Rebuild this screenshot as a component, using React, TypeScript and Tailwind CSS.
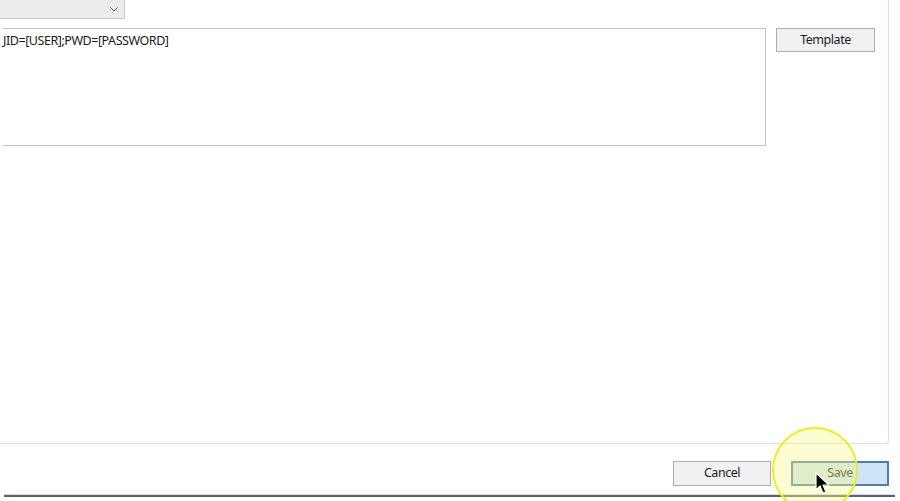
import React from 'react'

const font = { fontFamily: '"Noto Sans", "Open Sans", sans-serif' }

const Chevron = () => (
  <svg width="8" height="5" viewBox="0 0 8 5" className="text-[#555]">
    <path d="M0.5 0.5 L4 4 L7.5 0.5" fill="none" stroke="currentColor" strokeWidth="1" />
  </svg>
)

const Cursor = () => (
  <svg width="16" height="24" viewBox="0 0 16 24">
    <path d="M1 1 L1 18 L5 14 L8 21 L11 20 L8 13 L14 13 Z" fill="#000" stroke="#fff" strokeWidth="1.2" strokeLinejoin="round" />
  </svg>
)

export default function App() {
  return (
    <div className="relative w-[900px] h-[501px] bg-white overflow-hidden text-[#1b1b1b]" style={font}>
      {/* main panel */}
      <div className="w-[889px] h-[444px] border-r border-b border-[#d3e2f4] rounded-br-[3px] flex flex-col">
        <div className="w-[125px] h-[19px] bg-[#ececec] border-r border-b border-[#cbcbcb] flex items-center justify-end pr-[6px]">
          <Chevron />
        </div>
        <div className="flex items-start mt-[9px] ml-[3px]">
          <div className="w-[763px] h-[118px] border-t border-r border-b border-[#c2c2c2] bg-white pt-[3px] text-[12.5px] leading-[18px] tracking-[-0.45px]">
            JID=[USER];PWD=[PASSWORD]
          </div>
          <button className="ml-[10px] w-[99px] h-[24px] bg-[#f1f1f1] border border-[#adadad] text-[12.5px] tracking-[-0.45px] leading-none">
            Template
          </button>
        </div>
      </div>

      {/* bottom buttons */}
      <div className="flex justify-end gap-[20px] mt-[17px] pr-[11px]">
        <button className="w-[98px] h-[25px] bg-[#f1f1f1] border border-[#adadad] text-[12.5px] tracking-[-0.45px] leading-none">
          Cancel
        </button>
        <button className="w-[98px] h-[25px] bg-[#cde4f5] border-2 border-[#4f7ea6] text-[12.5px] tracking-[-0.45px] leading-none text-[#222]">
          Save
        </button>
      </div>

      {/* bottom rule */}
      <div className="ml-[4px] mt-[8px] w-[891px]">
        <div className="h-[1px] bg-[#c6e1ec]" />
        <div className="h-[2px] bg-[#5e6266]" />
      </div>

      {/* click highlight */}
      <div className="absolute left-[772px] top-[427px] w-[86px] h-[86px] rounded-full border-2 border-[#ecec2e] bg-[#fafa8c]/40 pointer-events-none" />
      <div className="absolute left-[815px] top-[472px] pointer-events-none">
        <Cursor />
      </div>
    </div>
  )
}
